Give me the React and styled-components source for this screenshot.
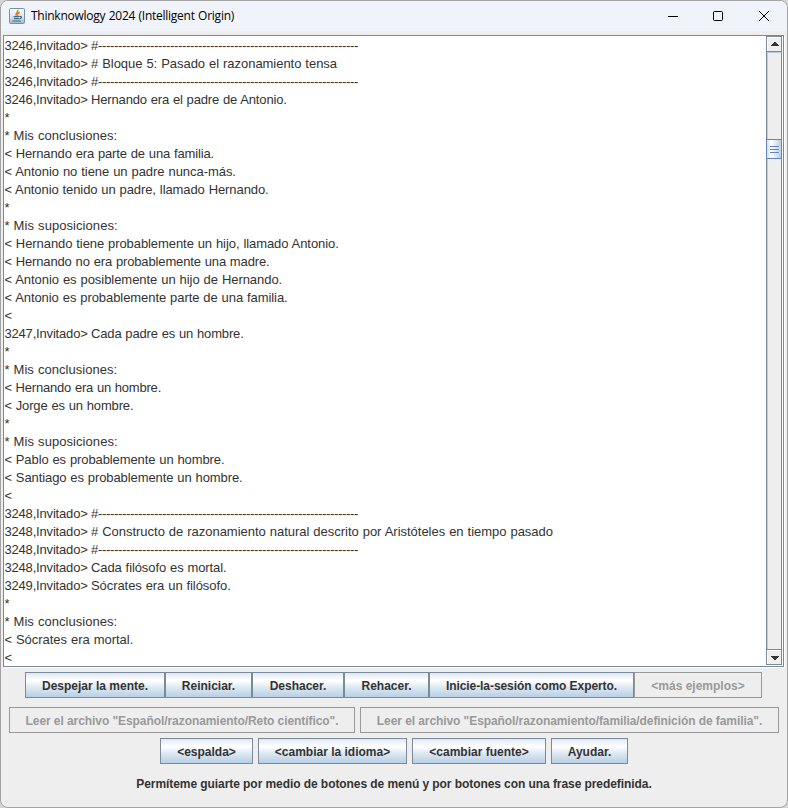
import React from 'react';
import styled, { createGlobalStyle, css } from 'styled-components';

const Global = createGlobalStyle`
  * { box-sizing: border-box; }
  body { margin: 0; background: #d5d5d5; overflow: hidden; }
`;

const Window = styled.div`
  width: 788px;
  height: 808px;
  display: flex;
  flex-direction: column;
  background: #eeeeee;
  border: 1px solid #a3a3a3;
  border-radius: 8px;
  overflow: hidden;
  color: #333333;
  font-family: "Liberation Sans", Arial, sans-serif;
`;

const TitleBar = styled.header`
  height: 30px;
  flex: none;
  display: flex;
  align-items: center;
  padding-left: 8px;
  background: #f0f3f9;
`;

const Title = styled.h1`
  flex: 1;
  margin: 0 0 0 6px;
  color: #000;
  font: 400 12px/30px "Open Sans", "Noto Sans", sans-serif;
  letter-spacing: -0.25px;
  word-spacing: 0.5px;
  white-space: nowrap;
`;

const WindowControl = styled.div`
  width: 46px;
  height: 30px;
  svg { display: block; }
`;

const Viewport = styled.main`
  flex: none;
  height: 632px;
  margin: 4px 3px 0 2px;
  display: flex;
  border: 1px solid #7a8a99;
  box-shadow: 1px 1px 0 #fff;
  background: #fff;
`;

const Output = styled.div`
  flex: 1;
  padding: 1px 0 0 0.4px;
  overflow: hidden;
`;

const Line = styled.div`
  height: 18px;
  font-size: 13px;
  line-height: 18px;
  white-space: pre;
`;

const Prompt = styled.span`
  display: inline-block;
  width: 86.6px;
  letter-spacing: -0.17px;
`;

const Message = styled.span`
  letter-spacing: ${(p) => p.$spacing}px;
  word-spacing: 0.4px;
`;

const ScrollBar = styled.div`
  width: 16px;
  flex: none;
  display: flex;
  flex-direction: column;
  border-left: 1px solid #7a8a99;
  border-right: 1px solid #7a8a99;
  margin: 0 1px 1px 0;
  background: #eeeeee;
`;

const ArrowButton = styled.div`
  height: 16px;
  flex: none;
  border: solid #7a8a99;
  border-width: 1px 0;
  box-shadow: inset 1px 1px 0 #fff;
  svg { display: block; }
`;

const Track = styled.div`
  flex: 1;
  padding-top: 87px;
  box-shadow: inset 1px 1px 0 #b8cfe5;
`;

const Thumb = styled.div`
  height: 20px;
  margin: 0 -1px;
  border: 1px solid #6382bf;
  background: linear-gradient(90deg, #d4e2ef, #fff 30%, #b8cfe5);
  svg { display: block; }
`;

const ButtonRow = styled.div`
  flex: none;
  display: flex;
  justify-content: center;
  gap: ${(p) => p.$gap || 0}px;
  margin-top: ${(p) => p.$top}px;
  margin-right: ${(p) => p.$shift || 0}px;
`;

const Button = styled.button`
  width: ${(p) => p.$w}px;
  height: 26px;
  flex: none;
  padding: 2px 0 0;
  border: 1px solid #7a8a99;
  background: linear-gradient(#dde8f3 0, #fff 30%, #fff 33%, #dde8f3 60%, #b8cfe5 100%);
  color: #333;
  font: 700 12px/22px "Liberation Sans", Arial, sans-serif;
  letter-spacing: ${(p) => p.$spacing || 0}px;
  white-space: nowrap;
  ${(p) => p.disabled && css`
    border-color: #999;
    background: #eee;
    color: #999;
  `}
`;

const Hint = styled.p`
  margin: 11px 0 0;
  font-size: 12px;
  line-height: 18px;
  font-weight: 700;
  letter-spacing: -0.07px;
  text-align: center;
`;

const rule = '#' + '-'.repeat(65);

// Each entry: message, width adjustment in pixels, optional prompt.
const lines = [
  [rule, -21.6, '3246,Invitado>'],
  ['# Bloque 5: Pasado el razonamiento tensa', 1, '3246,Invitado>'],
  [rule, -21.6, '3246,Invitado>'],
  ['Hernando era el padre de Antonio.', -3, '3246,Invitado>'],
  ['*', 0],
  ['* Mis conclusiones:', 1.6],
  ['< Hernando era parte de una familia.', -2.4],
  ['< Antonio no tiene un padre nunca-más.', 0.6],
  ['< Antonio tenido un padre, llamado Hernando.', -1.4],
  ['*', 0],
  ['* Mis suposiciones:', 2],
  ['< Hernando tiene probablemente un hijo, llamado Antonio.', -1.4],
  ['< Hernando no era probablemente una madre.', -3.4],
  ['< Antonio es posiblemente un hijo de Hernando.', 0.6],
  ['< Antonio es probablemente parte de una familia.', -0.4],
  ['<', 0],
  ['Cada padre es un hombre.', -2, '3247,Invitado>'],
  ['*', 0],
  ['* Mis conclusiones:', 1.6],
  ['< Hernando era un hombre.', -3.4],
  ['< Jorge es un hombre.', -1.4],
  ['*', 0],
  ['* Mis suposiciones:', 2],
  ['< Pablo es probablemente un hombre.', -1.4],
  ['< Santiago es probablemente un hombre.', -1.4],
  ['<', 0],
  [rule, -21.6, '3248,Invitado>'],
  ['# Constructo de razonamiento natural descrito por Aristóteles en tiempo pasado', 2.4, '3248,Invitado>'],
  [rule, -21.6, '3248,Invitado>'],
  ['Cada filósofo es mortal.', -1, '3248,Invitado>'],
  ['Sócrates era un filósofo.', -0.5, '3249,Invitado>'],
  ['*', 0],
  ['* Mis conclusiones:', 1.6],
  ['< Sócrates era mortal.', 0.6],
  ['<', 0],
];

const tracking = (text, extra) =>
  (extra - 0.4 * (text.split(' ').length - 1)) / text.length;

const JavaIcon = () => (
  <svg width="16" height="16" viewBox="0 0 16 16">
    <defs>
      <linearGradient id="tile" x1="0" y1="0" x2="0" y2="1">
        <stop offset="0" stopColor="#fbfcfd" />
        <stop offset="0.5" stopColor="#e2eaf0" />
        <stop offset="1" stopColor="#9fb8ca" />
      </linearGradient>
    </defs>
    <rect x="0.5" y="0.5" width="15" height="15" rx="1" fill="url(#tile)" stroke="#7292a9" />
    <path d="M8.8 1.8C9.6 4 5.8 5 7.2 7.8M10.8 4.2C8.4 5.3 8 6.3 9 7.8" fill="none" stroke="#e47a24" strokeWidth="1.5" />
    <path d="M4.5 8.7H10.3M5 10.7H9.8M3.3 13H11.7M10.5 8.5C13.2 8 12.8 10.5 10.5 10.9" fill="none" stroke="#3d6b8e" strokeWidth="1.2" />
  </svg>
);

const Arrow = ({ down }) => (
  <svg width="14" height="14" viewBox="0 0 14 14" shapeRendering="crispEdges" fill="#333">
    <path d={down
      ? 'M4 6h8v1h-8zM5 7h6v1h-6zM6 8h4v1h-4zM7 9h2v1h-2z'
      : 'M7 5h2v1h-2zM6 6h4v1h-4zM5 7h6v1h-6zM4 8h8v1h-8z'} />
  </svg>
);

const controls = [
  'M19 15.5h10',
  'M18.5 11.5q0-1 1-1h7q1 0 1 1v7q0 1-1 1h-7q-1 0-1-1z',
  'M18 10l10 10M28 10l-10 10',
];

export default function App() {
  return (
    <>
      <Global />
      <Window>
        <TitleBar>
          <JavaIcon />
          <Title>Thinknowlogy 2024 (Intelligent Origin)</Title>
          {controls.map((d) => (
            <WindowControl key={d}>
              <svg width="46" height="30" viewBox="0 0 46 30">
                <path d={d} fill="none" stroke="#000" />
              </svg>
            </WindowControl>
          ))}
        </TitleBar>
        <Viewport>
          <Output>
            {lines.map(([text, extra, prompt], i) => (
              <Line key={i}>
                {prompt && <Prompt>{prompt} </Prompt>}
                <Message $spacing={tracking(text, extra)}>{text}</Message>
              </Line>
            ))}
          </Output>
          <ScrollBar>
            <ArrowButton><Arrow /></ArrowButton>
            <Track>
              <Thumb>
                <svg width="14" height="18" viewBox="0 0 14 18" shapeRendering="crispEdges">
                  <path d="M4 6h9v1h-9zM4 9h9v1h-9zM4 12h9v1h-9z" fill="#fff" />
                  <path d="M3 6h9v1h-9zM3 9h9v1h-9zM3 12h9v1h-9z" fill="#6382bf" />
                </svg>
              </Thumb>
            </Track>
            <ArrowButton><Arrow down /></ArrowButton>
          </ScrollBar>
        </Viewport>
        <ButtonRow $top={5} $shift={1}>
          <Button $w={140}>Despejar la mente.</Button>
          <Button $w={87}>Reiniciar.</Button>
          <Button $w={92}>Deshacer.</Button>
          <Button $w={85}>Rehacer.</Button>
          <Button $w={205} $spacing={-0.08}>Inicie-la-sesión como Experto.</Button>
          <Button $w={128} disabled>&lt;más ejemplos&gt;</Button>
        </ButtonRow>
        <ButtonRow $top={9} $gap={5}>
          <Button $w={346} $spacing={-0.07} disabled>Leer el archivo "Español/razonamiento/Reto científico".</Button>
          <Button $w={419} $spacing={-0.08} disabled>Leer el archivo "Español/razonamiento/familia/definición de familia".</Button>
        </ButtonRow>
        <ButtonRow $top={5} $gap={5}>
          <Button $w={93}>&lt;espalda&gt;</Button>
          <Button $w={149}>&lt;cambiar la idioma&gt;</Button>
          <Button $w={134}>&lt;cambiar fuente&gt;</Button>
          <Button $w={77}>Ayudar.</Button>
        </ButtonRow>
        <Hint>Permíteme guiarte por medio de botones de menú y por botones con una frase predefinida.</Hint>
      </Window>
    </>
  );
}
